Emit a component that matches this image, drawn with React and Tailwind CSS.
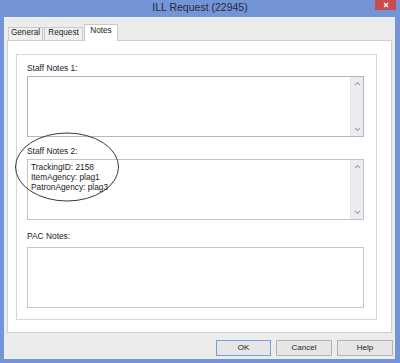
import React from 'react';

const font = { fontFamily: '"Liberation Sans", Arial, sans-serif' };

function ScrollBar() {
  return (
    <div className="flex flex-col justify-between items-center w-[13px] h-full bg-[#ececf0] border-l border-[#e2e2e8] py-[4px]">
      <svg width="7" height="5" viewBox="0 0 7 5">
        <path d="M1 4 L3.5 1.5 L6 4" fill="none" stroke="#a8a8b0" strokeWidth="1.2" />
      </svg>
      <svg width="7" height="5" viewBox="0 0 7 5">
        <path d="M1 1 L3.5 3.5 L6 1" fill="none" stroke="#a8a8b0" strokeWidth="1.2" />
      </svg>
    </div>
  );
}

function NoteBox({ label, lines, scroll, border, labelGap }) {
  return (
    <div className="flex flex-col">
      <div className="h-[11px] leading-[11px] text-[8.4px] text-[#222]">{label}</div>
      <div className={`flex w-[337px] h-[61px] bg-white border ${border} ${labelGap}`}>
        <div className="flex-1 pl-[3px] pt-[2px] text-[8.3px] leading-[10px] text-[#1a1a1a]">
          {lines.map((l) => (
            <div key={l}>{l}</div>
          ))}
        </div>
        {scroll && <ScrollBar />}
      </div>
    </div>
  );
}

function Button({ children, primary, width }) {
  return (
    <div
      className={`flex items-center justify-center h-[16px] ${width} text-[8px] text-[#222] bg-[#e6e6e6] border ${
        primary ? 'border-[#6fa3d8]' : 'border-[#b4b4b4]'
      }`}
    >
      {children}
    </div>
  );
}

export default function App() {
  return (
    <div style={font} className="relative w-[400px] h-[363px] bg-[#7394d6] flex flex-col overflow-hidden">
      <div className="relative h-[17px] flex items-center justify-center">
        <span className="text-[10.5px] leading-[17px] text-[#2a2a3a] pb-[2px]">ILL Request (22945)</span>
        <div className="absolute right-[4px] top-0 w-[21px] h-[10px] bg-[#c84c4c] flex items-center justify-center">
          <svg width="6" height="6" viewBox="0 0 6 6">
            <path d="M1 1 L5 5 M5 1 L1 5" stroke="#fff" strokeWidth="1.3" />
          </svg>
        </div>
      </div>

      <div className="flex-1 ml-[4px] mr-[5px] mb-[4px] bg-[#ececec] flex flex-col">
        <div className="flex items-end h-[23px] pl-[4px] text-[8.2px] text-[#222]">
          <div className="w-[35px] h-[14px] mb-[-1px] flex items-center justify-center pb-[2px] border border-b-0 border-[#c9c9c9] bg-[#f0f0f0]">
            General
          </div>
          <div className="ml-[1px] w-[39px] h-[14px] mb-[-1px] flex items-center justify-center pb-[2px] border border-b-0 border-[#c9c9c9] bg-[#f0f0f0]">
            Request
          </div>
          <div className="relative z-10 ml-[1px] w-[34px] h-[17px] mb-[-1px] flex items-center justify-center pb-[4px] border border-b-0 border-[#c9c9c9] bg-white">
            Notes
          </div>
        </div>

        <div className="ml-[3px] mr-[3px] h-[293px] bg-white border border-[#cfcfcf] pt-[13px] pl-[8px]">
          <div className="relative w-[361px] h-[266px] border border-[#d6d6d6] pt-[8px] pl-[10px]">
            <NoteBox label="Staff Notes 1:" lines={[]} scroll border="border-[#b4b4c8]" labelGap="mt-[2px]" />
            <div className="mt-[9px]">
              <NoteBox
                label="Staff Notes 2:"
                lines={['TrackingID: 2158', 'ItemAgency: plag1', 'PatronAgency: plag3']}
                scroll
                border="border-[#c4c4c8]"
                labelGap="mt-[2px]"
              />
            </div>
            <div className="mt-[11px]">
              <NoteBox label="PAC Notes:" lines={[]} border="border-[#c6cac6]" labelGap="mt-[5px]" />
            </div>
          </div>
        </div>

        <div className="flex justify-end gap-[5px] mt-[7px] pr-[2px]">
          <Button primary width="w-[55px]">OK</Button>
          <Button width="w-[56px]">Cancel</Button>
          <Button width="w-[56px]">Help</Button>
        </div>
      </div>

      <svg className="absolute left-0 top-0 pointer-events-none" width="400" height="363">
        <ellipse cx="67" cy="167" rx="51.5" ry="34" fill="none" stroke="#3a3a3a" strokeWidth="1" />
      </svg>
    </div>
  );
}
